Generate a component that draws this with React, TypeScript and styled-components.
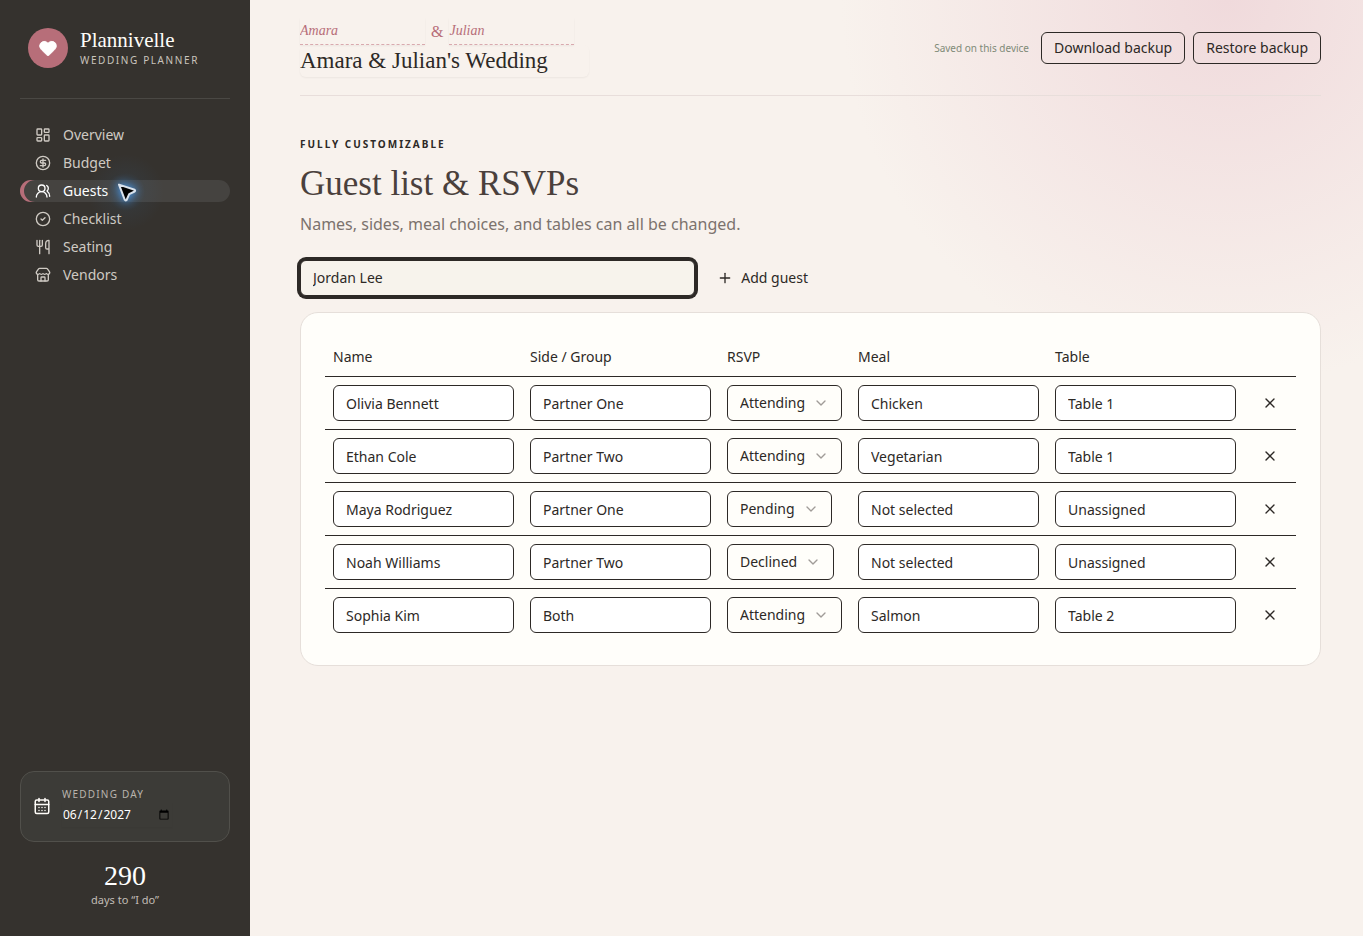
import React, { useState } from "react";
import styled, { createGlobalStyle, css } from "styled-components";
import {
  CalendarDays,
  ChevronDown,
  CircleCheck,
  CircleDollarSign,
  Heart,
  LayoutDashboard,
  Plus,
  Store,
  UsersRound,
  Utensils,
  X,
} from "lucide-react";

const sans = `"Noto Sans", sans-serif`;
const serif = `"Liberation Serif", serif`;
const ink = "#2d2926";
const rose = "#b76e79";

const GlobalStyle = createGlobalStyle`
  *, *::before, *::after { box-sizing: border-box; }
  body {
    margin: 0;
    font-family: ${sans};
    font-size: 14px;
    line-height: 20px;
    color: ${ink};
    background: #f8f2ed;
  }
  h1, p { margin: 0; }
  button, input, select { font: inherit; color: inherit; margin: 0; }
  button { cursor: pointer; }
`;

const Shell = styled.div`
  display: grid;
  grid-template-columns: 250px minmax(0, 1fr);
  min-height: 100vh;
  background: radial-gradient(circle at 90% 0, #f0dadc, transparent 25%) #f8f2ed;
`;

const Sidebar = styled.aside`
  position: relative;
  display: flex;
  flex-direction: column;
  padding: 28px 20px;
  color: #fffdf9;
  background: #35322e;
`;

const Brand = styled.div`
  display: flex;
  align-items: center;
  gap: 12px;
  padding: 0 8px 30px;
  border-bottom: 1px solid #4a4844;
`;

const BrandMark = styled.span`
  display: grid;
  place-items: center;
  width: 40px;
  height: 40px;
  border-radius: 50%;
  background: ${rose};
`;

const BrandText = styled.div`
  display: flex;
  flex-direction: column;
`;

const BrandName = styled.strong`
  font: 400 21px/24px ${serif};
`;

const BrandTag = styled.span`
  font-size: 10px;
  line-height: 16px;
  letter-spacing: 0.16em;
  text-transform: uppercase;
  color: #c9c4bd;
`;

const Nav = styled.nav`
  display: flex;
  flex-direction: column;
  gap: 6px;
  margin-top: 25px;
`;

const NavButton = styled.button<{ $active: boolean }>`
  display: flex;
  align-items: center;
  gap: 12px;
  height: 22px;
  padding: 0 15px;
  border: 0;
  border-radius: 12px;
  background: transparent;
  color: #cfcac3;
  text-align: left;
  ${(p) =>
    p.$active &&
    css`
      color: #ffffff;
      background: #454340;
      box-shadow: inset 4px 0 ${rose};
    `}
`;

const Pointer = styled.div`
  position: absolute;
  left: 81px;
  top: 147px;
  width: 90px;
  height: 90px;
  pointer-events: none;
  background: radial-gradient(circle, #3d8fe040 8%, #3d8fe00d 30%, transparent 60%);
  svg {
    display: block;
    filter: drop-shadow(0 0 4px #4b9df0);
  }
`;

const DateCard = styled.div`
  display: flex;
  align-items: center;
  gap: 11px;
  margin-top: auto;
  padding: 11px 12px 13px;
  height: 71px;
  border: 1px solid #51504b;
  border-radius: 14px;
  background: #3c3b37;
`;

const DateLabel = styled.label`
  display: flex;
  flex-direction: column;
  font-size: 10px;
  line-height: 18px;
  letter-spacing: 0.12em;
  text-transform: uppercase;
  color: #b9b4ad;
`;

const DateInput = styled.input`
  width: 110px;
  height: 24px;
  padding: 0;
  border: 0;
  outline: 0;
  background: transparent;
  font-size: 12px;
  color: #ffffff;
  box-shadow: 0 1px 2px #0000000d;
`;

const Countdown = styled.div`
  display: flex;
  flex-direction: column;
  align-items: center;
  padding-top: 18px;
  font-size: 11px;
  line-height: 16px;
  color: #c2bdb6;
  strong {
    font: 400 28px/32px ${serif};
    color: #ffffff;
  }
`;

const Main = styled.main`
  padding: 0 42px 40px 50px;
`;

const TopBar = styled.header`
  display: flex;
  align-items: center;
  justify-content: space-between;
  padding: 18px 0;
  border-bottom: 1px solid #e8dedb;
`;

const Names = styled.div`
  display: flex;
  align-items: center;
  gap: 6px;
  font: 400 16px/20px ${serif};
  color: ${rose};
`;

const PlainInput = styled.input`
  display: block;
  padding: 0;
  border: 0;
  outline: 0;
  background: transparent;
  box-shadow: 0 1px 2px #0000000d;
`;

const NameInput = styled(PlainInput)`
  width: 125px;
  height: 27px;
  border-bottom: 1px dashed #d9a9ae;
  font: italic 400 14px/20px ${serif};
`;

const TitleInput = styled(PlainInput)`
  width: 289px;
  height: 32px;
  border-radius: 6px;
  font: 400 23px/32px ${serif};
`;

const Actions = styled.div`
  display: flex;
  align-items: center;
  gap: 8px;
`;

const SaveState = styled.span`
  margin-right: 4px;
  font-size: 10px;
  color: #7f8a78;
`;

const OutlineButton = styled.button`
  height: 32px;
  padding: 0 12px;
  border: 1px solid ${ink};
  border-radius: 6px;
  background: transparent;
`;

const Intro = styled.section`
  display: flex;
  flex-direction: column;
  padding: 40px 0 24px;
`;

const Eyebrow = styled.p`
  font-size: 10px;
  line-height: 16px;
  font-weight: 700;
  letter-spacing: 2px;
  text-transform: uppercase;
`;

const Heading = styled.h1`
  margin: 10px 0 6px;
  font: 400 35px/44px ${serif};
  color: #4a403c;
`;

const Lead = styled.p`
  font-size: 16px;
  line-height: 24px;
  color: #7c736e;
`;

const AddForm = styled.form`
  display: grid;
  grid-template-columns: 1fr auto;
  gap: 10px;
  max-width: 520px;
  margin-bottom: 16px;
`;

const fieldBox = css`
  height: 36px;
  padding: 0 12px;
  border: 1px solid ${ink};
  border-radius: 6px;
  outline: 0;
`;

const NewGuest = styled.input`
  ${fieldBox}
  min-width: 0;
  padding-bottom: 2px;
  background: #f7f3ec;
  box-shadow: 0 0 0 3px ${ink};
`;

const GhostButton = styled.button`
  display: flex;
  align-items: center;
  justify-content: center;
  gap: 8px;
  height: 36px;
  padding: 0 12px;
  border: 0;
  border-radius: 6px;
  background: transparent;
`;

const Card = styled.section`
  padding: 24px;
  border: 1px solid #e6dfda;
  border-radius: 18px;
  background: #fffefa;
`;

const Table = styled.table`
  width: 100%;
  table-layout: fixed;
  border-collapse: separate;
  border-spacing: 0;
  th {
    height: 40px;
    padding: 0 8px;
    font-weight: 400;
    text-align: left;
    border-bottom: 1px solid ${ink};
  }
  td {
    padding: 8px;
    border-bottom: 1px solid ${ink};
  }
  tbody tr:last-child td {
    border-bottom: 0;
  }
`;

const Column = styled.col<{ $width?: number }>`
  width: ${(p) => (p.$width ? `${p.$width}px` : "auto")};
`;

const Field = styled.input`
  ${fieldBox}
  display: block;
  width: 100%;
  background: #ffffff;
`;

const SelectWrap = styled.span`
  position: relative;
  display: block;
  width: fit-content;
  svg {
    position: absolute;
    right: 13px;
    top: 10px;
    color: #a09c98;
    pointer-events: none;
  }
`;

const Select = styled.select`
  ${fieldBox}
  display: block;
  padding-right: 36px;
  appearance: none;
  field-sizing: content;
  background: transparent;
`;

const RemoveButton = styled(GhostButton)`
  width: 36px;
  padding: 0;
`;

const navItems = [
  { label: "Overview", Icon: LayoutDashboard },
  { label: "Budget", Icon: CircleDollarSign },
  { label: "Guests", Icon: UsersRound },
  { label: "Checklist", Icon: CircleCheck },
  { label: "Seating", Icon: Utensils },
  { label: "Vendors", Icon: Store },
];

type Guest = { name: string; side: string; rsvp: string; meal: string; table: string };

const initialGuests: Guest[] = [
  { name: "Olivia Bennett", side: "Partner One", rsvp: "Attending", meal: "Chicken", table: "Table 1" },
  { name: "Ethan Cole", side: "Partner Two", rsvp: "Attending", meal: "Vegetarian", table: "Table 1" },
  { name: "Maya Rodriguez", side: "Partner One", rsvp: "Pending", meal: "Not selected", table: "Unassigned" },
  { name: "Noah Williams", side: "Partner Two", rsvp: "Declined", meal: "Not selected", table: "Unassigned" },
  { name: "Sophia Kim", side: "Both", rsvp: "Attending", meal: "Salmon", table: "Table 2" },
];

export default function App() {
  const [active, setActive] = useState("Guests");
  const [guests, setGuests] = useState(initialGuests);
  const [draft, setDraft] = useState("Jordan Lee");

  const update = (row: number, key: keyof Guest, value: string) =>
    setGuests(guests.map((g, i) => (i === row ? { ...g, [key]: value } : g)));

  const addGuest = (event: React.FormEvent) => {
    event.preventDefault();
    if (!draft.trim()) return;
    setGuests([
      ...guests,
      { name: draft, side: "Both", rsvp: "Pending", meal: "Not selected", table: "Unassigned" },
    ]);
    setDraft("");
  };

  const field = (row: number, key: keyof Guest, label: string) => (
    <td>
      <Field
        aria-label={label}
        value={guests[row][key]}
        onChange={(e) => update(row, key, e.target.value)}
      />
    </td>
  );

  return (
    <>
      <GlobalStyle />
      <Shell>
        <Sidebar>
          <Brand>
            <BrandMark>
              <Heart size={20} fill="#fff" color="#fff" strokeWidth={1} />
            </BrandMark>
            <BrandText>
              <BrandName>Plannivelle</BrandName>
              <BrandTag>Wedding planner</BrandTag>
            </BrandText>
          </Brand>
          <Nav>
            {navItems.map(({ label, Icon }) => (
              <NavButton
                key={label}
                type="button"
                $active={label === active}
                onClick={() => setActive(label)}
              >
                <Icon size={16} />
                {label}
              </NavButton>
            ))}
          </Nav>
          <Pointer>
            <svg width="90" height="90" viewBox="0 0 90 90" aria-hidden="true">
              <path
                d="M38 37.6 L53.6 42.8 Q54.6 43.6 53.6 44.5 L48.2 47.2 L45.6 53 Q44.6 54 43.8 52.8 Z"
                fill="#000"
                stroke="#d9e2ec"
                strokeWidth="2"
                strokeLinejoin="round"
              />
            </svg>
          </Pointer>
          <DateCard>
            <CalendarDays size={18} />
            <DateLabel>
              Wedding day
              <DateInput type="date" defaultValue="2027-06-12" />
            </DateLabel>
          </DateCard>
          <Countdown>
            <strong>290</strong>
            <span>days to “I do”</span>
          </Countdown>
        </Sidebar>

        <Main>
          <TopBar>
            <div>
              <Names>
                <NameInput aria-label="Partner one" defaultValue="Amara" />
                <span>&amp;</span>
                <NameInput aria-label="Partner two" defaultValue="Julian" />
              </Names>
              <TitleInput aria-label="Wedding title" defaultValue="Amara & Julian's Wedding" />
            </div>
            <Actions>
              <SaveState>Saved on this device</SaveState>
              <OutlineButton type="button">Download backup</OutlineButton>
              <OutlineButton type="button">Restore backup</OutlineButton>
            </Actions>
          </TopBar>

          <Intro>
            <Eyebrow>Fully customizable</Eyebrow>
            <Heading>Guest list &amp; RSVPs</Heading>
            <Lead>Names, sides, meal choices, and tables can all be changed.</Lead>
          </Intro>

          <AddForm onSubmit={addGuest}>
            <NewGuest
              aria-label="Guest name"
              value={draft}
              onChange={(e) => setDraft(e.target.value)}
            />
            <GhostButton type="submit">
              <Plus size={16} />
              Add guest
            </GhostButton>
          </AddForm>

          <Card>
            <Table>
              <colgroup>
                <Column />
                <Column />
                <Column $width={131} />
                <Column />
                <Column />
                <Column $width={52} />
              </colgroup>
              <thead>
                <tr>
                  <th>Name</th>
                  <th>Side / Group</th>
                  <th>RSVP</th>
                  <th>Meal</th>
                  <th>Table</th>
                  <th aria-label="Actions" />
                </tr>
              </thead>
              <tbody>
                {guests.map((guest, row) => (
                  <tr key={row}>
                    {field(row, "name", "Name")}
                    {field(row, "side", "Side / Group")}
                    <td>
                      <SelectWrap>
                        <Select
                          aria-label="RSVP"
                          value={guest.rsvp}
                          onChange={(e) => update(row, "rsvp", e.target.value)}
                        >
                          <option>Attending</option>
                          <option>Pending</option>
                          <option>Declined</option>
                        </Select>
                        <ChevronDown size={16} />
                      </SelectWrap>
                    </td>
                    {field(row, "meal", "Meal")}
                    {field(row, "table", "Table")}
                    <td>
                      <RemoveButton
                        type="button"
                        aria-label={`Remove ${guest.name}`}
                        onClick={() => setGuests(guests.filter((_, i) => i !== row))}
                      >
                        <X size={16} />
                      </RemoveButton>
                    </td>
                  </tr>
                ))}
              </tbody>
            </Table>
          </Card>
        </Main>
      </Shell>
    </>
  );
}
